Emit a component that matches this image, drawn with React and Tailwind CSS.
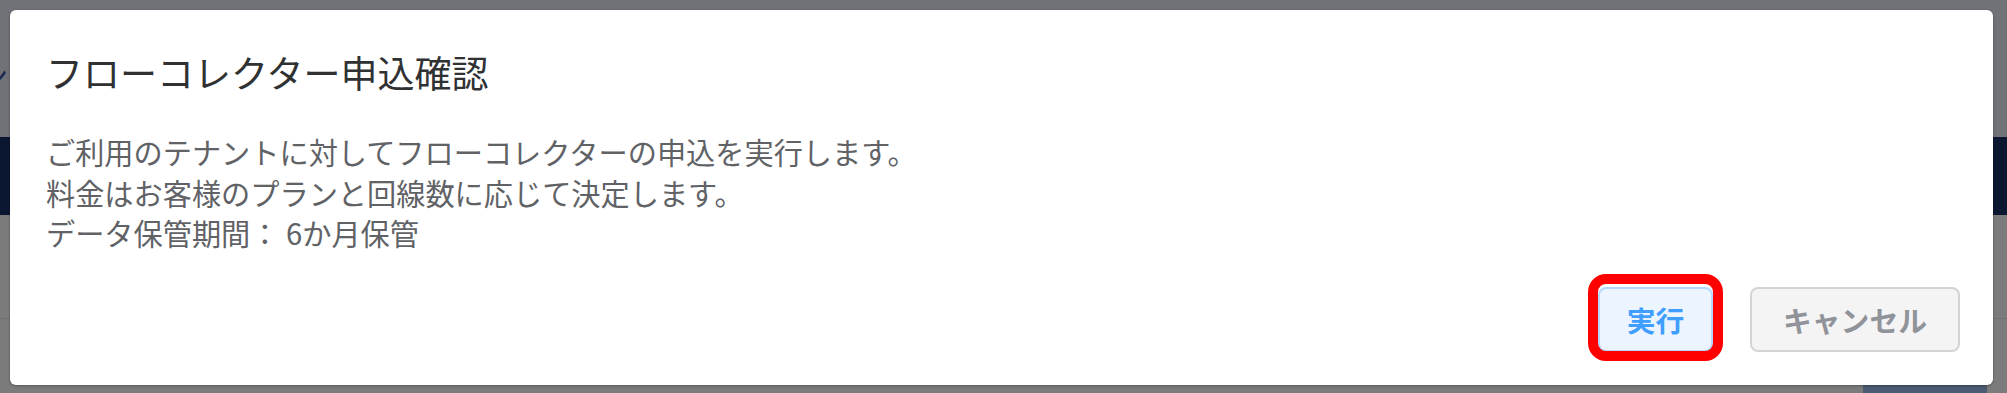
import React from "react";

const font = "font-['Noto_Sans_CJK_JP','Noto_Sans',sans-serif]";

const messages = [
  "ご利用のテナントに対してフローコレクターの申込を実行します。",
  "料金はお客様のプランと回線数に応じて決定します。",
  "データ保管期間： 6か月保管",
];

// page behind the dimmed overlay
const Backdrop = () => (
  <div className="flex flex-col h-full">
    <div className="relative h-[137px] bg-[#717277]">
      <span className={`absolute left-[-22px] top-[56px] text-[30px] leading-[36px] text-[#1b2a4e] ${font}`}>
        ン
      </span>
    </div>
    <div className="h-[78px] bg-[#0b1631]" />
    <div className="h-[103px] bg-[#7b7b7b]" />
    <div className="h-px bg-[#707070]" />
    <div className="flex-1 flex justify-end items-end bg-[#7b7b7b]">
      <div className="w-[124px] h-[8px] mr-[20px] bg-[#4b5b73]" />
    </div>
  </div>
);

const App = () => {
  return (
    <div className={`relative w-[2007px] h-[393px] overflow-hidden bg-[#7b7b7b] ${font}`}>
      <Backdrop />

      <div className="absolute left-[10px] top-[10px] w-[1983px] h-[375px] bg-white rounded-[6px] shadow-[0_1px_3px_rgba(0,0,0,0.3)] flex flex-col">
        <h2 className="pt-[38px] px-[36px] text-[37px] leading-[48px] font-normal text-[#303133]">
          フローコレクター申込確認
        </h2>

        <div className="mt-[35px] px-[36px] text-[29.2px] leading-[40.5px] text-[#606266]">
          {messages.map((line) => (
            <p key={line}>{line}</p>
          ))}
        </div>

        <div className="mt-auto flex justify-end gap-[37px] pr-[33px] pb-[33px]">
          <div className="relative">
            <button className="w-[115px] h-[65px] rounded-[8px] border-2 border-[#b3d8ff] bg-[#ecf5ff] text-[#409eff] text-[28.8px] font-bold">
              実行
            </button>
            {/* highlight marker */}
            <span className="absolute -top-[13px] -bottom-[9px] -left-[10px] -right-[10px] border-[10px] border-[#ff0000] rounded-[18px] pointer-events-none" />
          </div>
          <button className="w-[210px] h-[65px] rounded-[8px] border-2 border-[#d3d4d6] bg-[#f4f4f5] text-[#909399] text-[28.8px] font-bold">
            キャンセル
          </button>
        </div>
      </div>
    </div>
  );
};

export default App;
